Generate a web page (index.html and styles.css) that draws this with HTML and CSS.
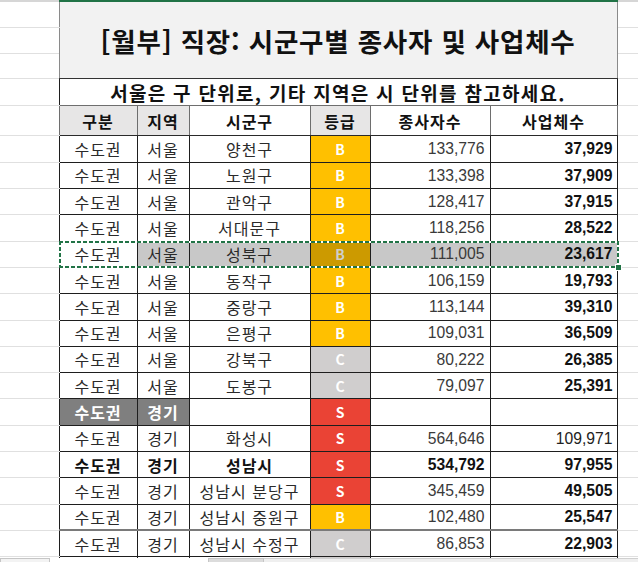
FILE: index.html
```html
<!DOCTYPE html>
<html lang="ko">
<head>
<meta charset="utf-8">
<title>[월부] 직장: 시군구별 종사자 및 사업체수</title>
<link rel="stylesheet" href="styles.css">
</head>
<body>
<div class="sheet">
  <div class="colbar"><span class="cb-left"></span><span class="cb-sel"></span><span class="cb-right"></span></div>
  <table class="grid">
    <colgroup>
      <col class="c-gut"><col class="c-a"><col class="c-b"><col class="c-c"><col class="c-d"><col class="c-e"><col class="c-f"><col class="c-gut2">
    </colgroup>
    <tr class="r-title"><td class="gut"></td><td class="title" colspan="6" rowspan="3">[월부] 직장: 시군구별 종사자 및 사업체수</td><td class="gut"></td></tr>
    <tr class="r-title"><td class="gut"></td><td class="gut"></td></tr>
    <tr class="r-title"><td class="gut"></td><td class="gut"></td></tr>
    <tr class="r-sub"><td class="gut"></td><td class="sub" colspan="6">서울은 구 단위로, 기타 지역은 시 단위를 참고하세요.</td><td class="gut"></td></tr>
    <tr class="r-head">
      <td class="gut"></td>
      <td class="h h-gray">구분</td><td class="h h-gray">지역</td><td class="h">시군구</td><td class="h h-gray">등급</td><td class="h">종사자수</td><td class="h">사업체수</td>
      <td class="gut"></td>
    </tr>
    <tr class="r-data"><td class="gut"></td><td class="t">수도권</td><td class="t">서울</td><td class="t">양천구</td><td class="g g-b">B</td><td class="n1">133,776</td><td class="n2">37,929</td><td class="gut"></td></tr>
    <tr class="r-data"><td class="gut"></td><td class="t">수도권</td><td class="t">서울</td><td class="t">노원구</td><td class="g g-b">B</td><td class="n1">133,398</td><td class="n2">37,909</td><td class="gut"></td></tr>
    <tr class="r-data"><td class="gut"></td><td class="t">수도권</td><td class="t">서울</td><td class="t">관악구</td><td class="g g-b">B</td><td class="n1">128,417</td><td class="n2">37,915</td><td class="gut"></td></tr>
    <tr class="r-data"><td class="gut"></td><td class="t">수도권</td><td class="t">서울</td><td class="t">서대문구</td><td class="g g-b">B</td><td class="n1">118,256</td><td class="n2">28,522</td><td class="gut"></td></tr>
    <tr class="r-data r-sel"><td class="gut"></td><td class="t anchor">수도권<span class="ants"></span><span class="handle"></span></td><td class="t sel">서울</td><td class="t sel">성북구</td><td class="g g-b-sel">B</td><td class="n1 sel">111,005</td><td class="n2 sel">23,617</td><td class="gut"></td></tr>
    <tr class="r-data"><td class="gut"></td><td class="t">수도권</td><td class="t">서울</td><td class="t">동작구</td><td class="g g-b">B</td><td class="n1">106,159</td><td class="n2">19,793</td><td class="gut"></td></tr>
    <tr class="r-data"><td class="gut"></td><td class="t">수도권</td><td class="t">서울</td><td class="t">중랑구</td><td class="g g-b">B</td><td class="n1">113,144</td><td class="n2">39,310</td><td class="gut"></td></tr>
    <tr class="r-data"><td class="gut"></td><td class="t">수도권</td><td class="t">서울</td><td class="t">은평구</td><td class="g g-b">B</td><td class="n1">109,031</td><td class="n2">36,509</td><td class="gut"></td></tr>
    <tr class="r-data"><td class="gut"></td><td class="t">수도권</td><td class="t">서울</td><td class="t">강북구</td><td class="g g-c">C</td><td class="n1">80,222</td><td class="n2">26,385</td><td class="gut"></td></tr>
    <tr class="r-data"><td class="gut"></td><td class="t">수도권</td><td class="t">서울</td><td class="t">도봉구</td><td class="g g-c">C</td><td class="n1">79,097</td><td class="n2">25,391</td><td class="gut"></td></tr>
    <tr class="r-data"><td class="gut"></td><td class="t dk">수도권</td><td class="t dk">경기</td><td class="t"></td><td class="g g-s">S</td><td class="n1"></td><td class="n2"></td><td class="gut"></td></tr>
    <tr class="r-data"><td class="gut"></td><td class="t">수도권</td><td class="t">경기</td><td class="t">화성시</td><td class="g g-s">S</td><td class="n1">564,646</td><td class="n2 plain">109,971</td><td class="gut"></td></tr>
    <tr class="r-data r-bold"><td class="gut"></td><td class="t">수도권</td><td class="t">경기</td><td class="t">성남시</td><td class="g g-s">S</td><td class="n1">534,792</td><td class="n2">97,955</td><td class="gut"></td></tr>
    <tr class="r-data"><td class="gut"></td><td class="t">수도권</td><td class="t">경기</td><td class="t">성남시 분당구</td><td class="g g-s">S</td><td class="n1">345,459</td><td class="n2">49,505</td><td class="gut"></td></tr>
    <tr class="r-data"><td class="gut"></td><td class="t">수도권</td><td class="t">경기</td><td class="t">성남시 중원구</td><td class="g g-b">B</td><td class="n1">102,480</td><td class="n2">25,547</td><td class="gut"></td></tr>
    <tr class="r-data r-split"><td class="gut"></td><td class="t">수도권</td><td class="t">경기</td><td class="t">성남시 수정구</td><td class="g g-c">C</td><td class="n1">86,853</td><td class="n2">22,903</td><td class="gut"></td></tr>
    <tr class="r-tail"><td class="gut"></td><td></td><td></td><td></td><td class="g-c"></td><td></td><td></td><td class="gut"></td></tr>
  </table>
  <div class="tabs"><span class="tab-a"></span><span class="tab-gap"></span><span class="tab-b"></span><span class="tab-rest"></span></div>
</div>
</body>
</html>
```

FILE: styles.css
```css
html, body {
  margin: 0;
  padding: 0;
}
body {
  width: 638px;
  height: 562px;
  overflow: hidden;
  background: #ffffff;
  font-family: "Noto Sans CJK KR", "Noto Sans", sans-serif;
  color: #222;
}
.sheet {
  width: 638px;
  height: 562px;
  overflow: hidden;
  position: relative;
}
.colbar {
  display: flex;
  height: 2px;
}
.cb-left { width: 59px; background: #d6d6d6; }
.cb-sel { width: 559px; background: #217346; }
.cb-right { flex: 1; background: #d6d6d6; }

.grid {
  border-collapse: collapse;
  table-layout: fixed;
  width: 638px;
}
.c-gut { width: 59px; }
.c-a { width: 78px; }
.c-b { width: 52px; }
.c-c { width: 121px; }
.c-d { width: 60px; }
.c-e { width: 120px; }
.c-f { width: 127px; }
.c-gut2 { width: 21px; }

.grid td {
  padding: 0;
  vertical-align: middle;
  white-space: nowrap;
  border: 1px solid #1e1e1e;
  line-height: 1;
}
.grid td.gut {
  border: none;
  border-bottom: 1px solid #e0e0e0;
}

.r-title { height: 25.67px; }
.r-sub { height: 26.3px; }
.r-head { height: 30.7px; }
.r-data { height: 26.3px; }
.r-tail { height: 6px; }

.title {
  background: #f2f2f2;
  text-align: center;
  font-weight: 700;
  font-size: 26.5px;
  letter-spacing: 0.8px;
  color: #111;
  border-top: none !important;
  border-left: 1px solid #8a8a8a !important;
  border-right: 1px solid #8a8a8a !important;
  border-bottom: 1px solid #333 !important;
  padding-top: 2px !important;
}
.sub {
  text-align: center;
  font-weight: 700;
  font-size: 19px;
  letter-spacing: 1.3px;
  color: #111;
  background: #fff;
  border-bottom: 1px solid #6e6e6e !important;
}

.h {
  text-align: center;
  font-weight: 700;
  font-size: 16px;
  letter-spacing: 1px;
  color: #111;
  background: #fff;
  border-left: 1px solid #6e6e6e !important;
  border-right: 1px solid #6e6e6e !important;
  border-bottom: 1px solid #2a2a2a !important;
}
.h-gray { background: #e7e6e6; }

.t {
  text-align: center;
  font-size: 16px;
  letter-spacing: 1px;
  color: #2a2a2a;
  background: #fff;
}
.n1, .n2 {
  font-family: "Liberation Sans", Arial, sans-serif;
  font-size: 15.7px;
  text-align: right;
  background: #fff;
}
.n1 {
  padding-right: 5px !important;
  color: #3a3a3a;
}
.n2 {
  padding-right: 4px !important;
  color: #111;
  font-weight: 700;
}
.n2.plain {
  color: #222;
  font-weight: 400;
}

.g {
  text-align: center;
  font-weight: 700;
  font-size: 14px;
  color: #fff;
}
.g-b { background: #ffc000; }
.g-c { background: #d0cece; }
.g-s { background: #ea4335; }
.g-b-sel { background: #cc9a00; color: #cfcfcf; }

.sel { background: #c8c8c8; }

.dk {
  background: #7f7f7f;
  color: #fff;
  font-weight: 700;
}
.r-bold td { font-weight: 700; color: #111; }
.r-bold td.g { color: #fff; }

.r-split td:not(.gut) { border-top: 2px solid #7a7a7a; }

.r-tail td:not(.gut) {
  border-bottom: none;
}

.anchor { position: relative; }
.ants {
  position: absolute;
  left: -1px;
  top: -1px;
  width: 560px;
  bottom: -1px;
  background:
    repeating-linear-gradient(90deg, #217346 0 4px, #ffffff 4px 6px) top left / 100% 2px no-repeat,
    repeating-linear-gradient(90deg, #217346 0 4px, #ffffff 4px 6px) bottom left / 100% 2px no-repeat,
    repeating-linear-gradient(180deg, #217346 0 4px, #ffffff 4px 6px) top left / 2px 100% no-repeat,
    repeating-linear-gradient(180deg, #217346 0 4px, #ffffff 4px 6px) top right / 2px 100% no-repeat;
}
.handle {
  position: absolute;
  left: 555px;
  bottom: -4px;
  width: 5px;
  height: 5px;
  background: #217346;
  border: 1px solid #fff;
}

.tabs {
  display: flex;
  height: 4px;
  position: absolute;
  left: 0;
  right: 0;
  bottom: 0;
}
.tab-a { width: 48px; background: #f3f3f3; border: 1px solid #c6c6c6; border-bottom: none; }
.tab-gap { width: 158px; background: #fff; }
.tab-b { width: 54px; background: #dcdcdc; border: 1px solid #c6c6c6; border-bottom: none; }
.tab-rest { flex: 1; background: #efefef; border-top: 1px solid #d0d0d0; }
```
